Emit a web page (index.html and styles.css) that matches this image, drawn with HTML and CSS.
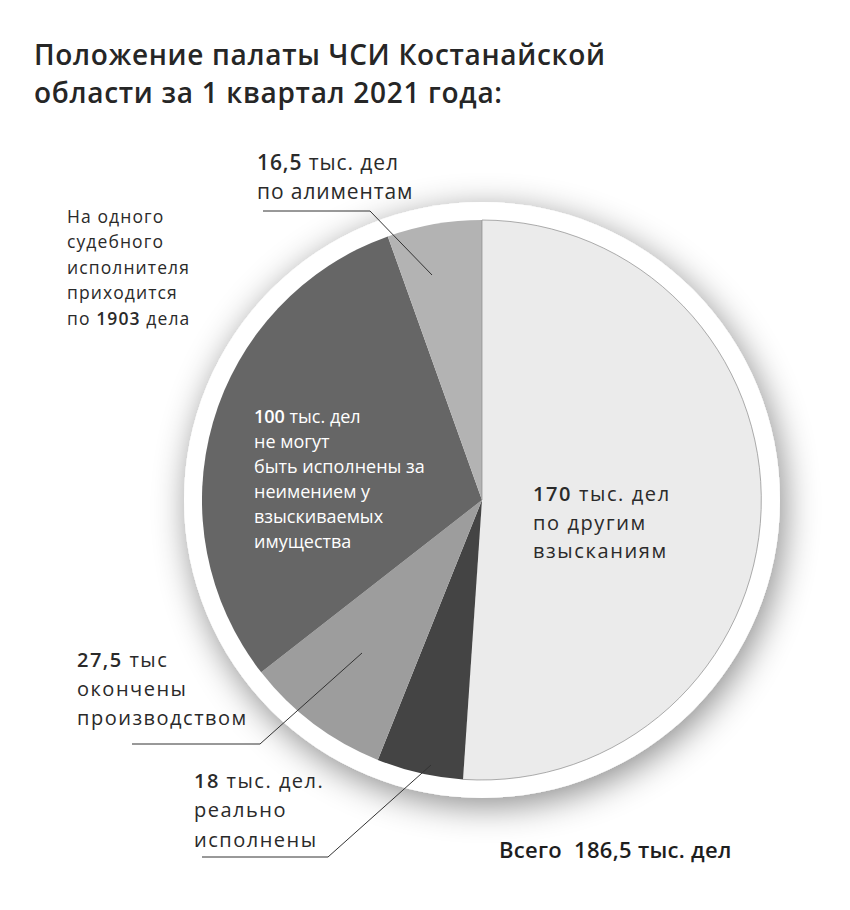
FILE: index.html
```html
<!DOCTYPE html>
<html lang="ru">
<head>
<meta charset="utf-8">
<title>Положение палаты ЧСИ Костанайской области</title>
<link rel="stylesheet" href="styles.css">
</head>
<body>
<main class="page">
  <header class="header">
    <h1 class="title">Положение палаты ЧСИ Костанайской<br>области за 1 квартал 2021 года:</h1>
  </header>
  <section class="chart">
    <svg class="pie" viewBox="0 120 850 790" width="850" height="790" aria-hidden="true">
      <defs>
        <filter id="ringShadow" x="-30%" y="-30%" width="160%" height="160%">
          <feDropShadow dx="4" dy="8" stdDeviation="17" flood-color="#000" flood-opacity="0.45"/>
        </filter>
      </defs>
      <circle class="ring" cx="482" cy="500" r="298" filter="url(#ringShadow)"/>
      <path class="s-other" d="M482,500 L482,220 A280,280 0 1 1 463,779.4 Z"/>
      <path class="s-real" d="M482,500 L463,779.4 A280,280 0 0 1 377.8,759.9 Z"/>
      <path class="s-done" d="M482,500 L377.8,759.9 A280,280 0 0 1 261.2,672.3 Z"/>
      <path class="s-none" d="M482,500 L261.2,672.3 A280,280 0 0 1 387.8,236.4 Z"/>
      <path class="s-alim" d="M482,500 L387.8,236.4 A280,280 0 0 1 482,220 Z"/>
      <path class="outline" d="M482,500 L482,220 A280,280 0 1 1 463,779.4"/>
      <polyline class="leader" points="263,211 370,211 432,275"/>
      <polyline class="leader" points="132,744 260,744 362,653"/>
      <polyline class="leader" points="202,857 328,857 431,765"/>
    </svg>
    <p class="label l-alim"><b>16,5</b> тыс. дел<br>по алиментам</p>
    <p class="label l-one">На одного<br>судебного<br>исполнителя<br>приходится<br>по <b>1903</b> дела</p>
    <p class="label l-none"><b>100</b> тыс. дел<br>не могут<br>быть исполнены за<br>неимением у<br>взыскиваемых<br>имущества</p>
    <p class="label l-other"><b>170</b> тыс. дел<br>по другим<br>взысканиям</p>
    <p class="label l-done"><b>27,5</b> тыс<br>окончены<br>производством</p>
    <p class="label l-real"><b>18</b> тыс. дел.<br>реально<br>исполнены</p>
    <p class="label l-total">Всего&nbsp; 186,5 тыс. дел</p>
  </section>
</main>
</body>
</html>
```
FILE: styles.css
```css
html, body {
  margin: 0;
  padding: 0;
  background: #ffffff;
}
body {
  font-family: "Open Sans", "Noto Sans", "DejaVu Sans", sans-serif;
  color: #2a2a2a;
}
.page {
  width: 850px;
  height: 910px;
  overflow: hidden;
  display: flex;
  flex-direction: column;
}
.header {
  box-sizing: border-box;
  height: 120px;
  padding: 35px 0 0 34px;
}
.title {
  margin: 0;
  font-size: 28px;
  line-height: 38px;
  font-weight: 600;
  letter-spacing: 0.7px;
  color: #262626;
}
.chart {
  position: relative;
  width: 850px;
  height: 790px;
}
.pie {
  position: absolute;
  left: 0;
  top: 0;
  display: block;
}
.ring { fill: #ffffff; }
.s-other { fill: #ebebeb; }
.s-real { fill: #444444; }
.s-done { fill: #9d9d9d; }
.s-none { fill: #666666; }
.s-alim { fill: #b3b3b3; }
.outline {
  fill: none;
  stroke: #8a8a8a;
  stroke-width: 0.7;
}
.leader {
  fill: none;
  stroke: #333333;
  stroke-width: 1;
}
.label {
  position: absolute;
  margin: 0;
  font-weight: 400;
  color: #2a2a2a;
  white-space: nowrap;
}
.label b { font-weight: 600; }
.l-alim { left: 257px; top: 28px; font-size: 21px; line-height: 29px; letter-spacing: 0.9px; }
.l-one { left: 67px; top: 83.5px; font-size: 17.5px; line-height: 25.5px; letter-spacing: 1.1px; }
.l-none { left: 254px; top: 283.5px; font-size: 18px; line-height: 25px; color: #ffffff; }
.l-other { left: 533px; top: 360px; font-size: 20px; line-height: 28.5px; letter-spacing: 1.6px; }
.l-done { left: 77px; top: 524.7px; font-size: 20px; line-height: 29px; letter-spacing: 1.5px; }
.l-real { left: 194px; top: 645.5px; font-size: 20px; line-height: 29.5px; letter-spacing: 1.5px; }
.l-total { left: 499px; top: 714.5px; font-size: 22px; line-height: 28px; font-weight: 600; letter-spacing: 0.3px; color: #1e1e1e; }
```
